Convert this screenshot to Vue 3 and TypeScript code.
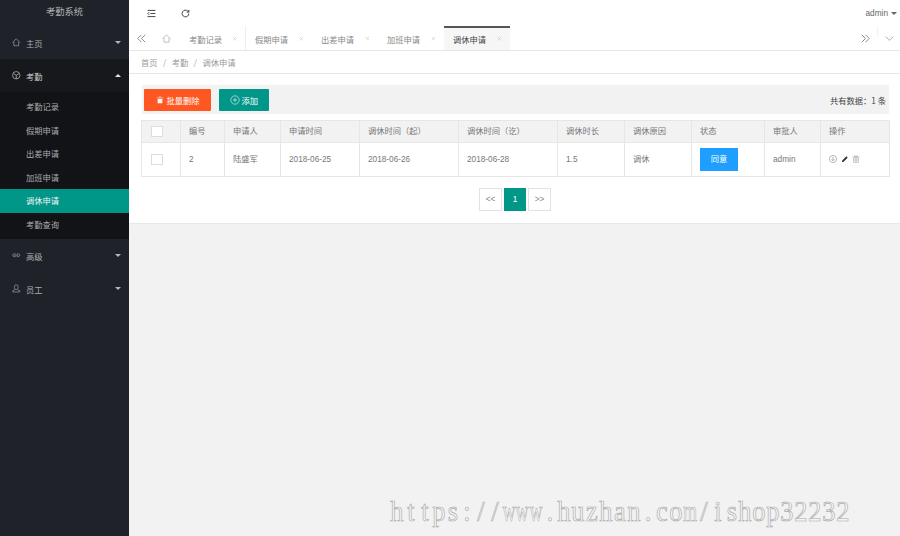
<template>
  <div class="app">
    <!-- Sidebar -->
    <aside class="side">
      <div class="side__title">考勤系统</div>
      <div class="nav nav--first">
        <svg class="nav__icon" viewBox="0 0 16 16"><path d="M1 8.500 8 1.500l7 7M3.500 7v7.500h9V7" /></svg>
        <span>主页</span><i class="caret"></i>
      </div>
      <div class="nav nav--open">
        <svg class="nav__icon" viewBox="0 0 16 16"><circle cx="8" cy="8" r="7" /><path d="M3 5l5 3 5-3M8 8v7" /></svg>
        <span>考勤</span><i class="caret caret--up"></i>
      </div>
      <ul class="sub">
        <li v-for="s in subItems" :key="s" :class="{ 'sub--on': s === '调休申请' }">{{ s }}</li>
      </ul>
      <div class="nav">
        <svg class="nav__icon" viewBox="0 0 16 16"><path d="M7 5.500H4a2.500 2.500 0 0 0 0 5h3M9 5.500h3a2.500 2.500 0 0 1 0 5H9M4.500 8h7" /></svg>
        <span>高级</span><i class="caret"></i>
      </div>
      <div class="nav">
        <svg class="nav__icon" viewBox="0 0 16 16"><path d="M4.500 7V5a3.500 3.500 0 0 1 7 0v2a3.500 3.500 0 0 1-7 0ZM5.500 11 1.500 12.500V15h13v-2.500L10.500 11" /></svg>
        <span>员工</span><i class="caret"></i>
      </div>
    </aside>

    <main class="main">
      <!-- Top bar -->
      <header class="top">
        <svg class="top__icon" viewBox="0 0 16 16"><path d="M1 2.500h14M6 8h9M1 13.500h14M4 5.500 1.500 8 4 10.500" /></svg>
        <svg class="top__icon top__icon--refresh" viewBox="0 0 16 16"><path d="M14 8a6 6 0 1 1-1.800-4.300L14 5.500M14 1.500v4h-4" /></svg>
        <span class="top__user">admin<i class="caret caret--dark"></i></span>
      </header>

      <!-- Tabs -->
      <nav class="tabs">
        <svg class="tabs__arrow" viewBox="0 0 12 12"><path d="M6 1 1 6l5 5M11 1 6 6l5 5" /></svg>
        <svg class="tabs__home" viewBox="0 0 16 16"><path d="M1 8.500 8 1.500l7 7M3.500 7v7.500h9V7" /></svg>
        <div
          v-for="t in tabs"
          :key="t"
          class="tab"
          :class="{ 'tab--on': t === '调休申请' }"
        >
          <span>{{ t }}</span>
          <svg class="tab__x" viewBox="0 0 8 8"><path d="M1 1l6 6M7 1 1 7" /></svg>
        </div>
        <div class="tabs__end">
          <svg class="tabs__arrow" viewBox="0 0 12 12"><path d="M1 1l5 5-5 5M6 1l5 5-5 5" /></svg>
          <i class="tabs__sep"></i>
          <svg class="tabs__down" viewBox="0 0 12 12"><path d="M1 3.500 6 8.500l5-5" /></svg>
        </div>
      </nav>

      <!-- Breadcrumb -->
      <div class="crumb">
        <span>首页</span><em>/</em><span>考勤</span><em>/</em><span>调休申请</span>
      </div>

      <section class="panel">
        <div class="bar">
          <button class="btn btn--red">
            <svg class="btn__icon" viewBox="0 0 12 12"><path d="M1 2.500h10v1H1zM4 1h4v1H4zM2.500 4.500h7V11h-7z" /></svg>
            批量删除
          </button>
          <button class="btn btn--green">
            <svg class="btn__plus" viewBox="0 0 12 12"><circle cx="6" cy="6" r="5" /><path d="M3.500 6h5M6 3.500v5" /></svg>
            添加
          </button>
          <span class="bar__count">共有数据：1 条</span>
        </div>

        <table class="grid">
          <colgroup>
            <col v-for="(w, i) in colWidths" :key="i" :style="{ width: w + 'px' }" />
          </colgroup>
          <thead>
            <tr>
              <th><i class="check"></i></th>
              <th v-for="h in headers" :key="h">{{ h }}</th>
            </tr>
          </thead>
          <tbody>
            <tr>
              <td><i class="check"></i></td>
              <td>2</td>
              <td>陆盛军</td>
              <td>2018-06-25</td>
              <td>2018-06-26</td>
              <td>2018-06-28</td>
              <td>1.5</td>
              <td>调休</td>
              <td><span class="agree">同意</span></td>
              <td>admin</td>
              <td class="ops">
                <svg viewBox="0 0 12 12" class="op op--down"><circle cx="6" cy="6" r="5.300" /><path d="M6 3v5.500M3.800 6.300 6 8.500l2.200-2.200" /></svg>
                <svg viewBox="0 0 12 12" class="op op--fill"><path d="M1.500 8.500 8 2l2 2-6.500 6.500h-2z" /></svg>
                <svg viewBox="0 0 12 12" class="op op--trash"><path d="M1 3h10M4 3V1.500h4V3M2.500 4.500h7V11h-7zM5 6v3.500M7 6v3.500" /></svg>
              </td>
            </tr>
          </tbody>
        </table>

        <div class="pager">
          <span class="pager__item">&lt;&lt;</span>
          <span class="pager__item pager__item--on">1</span>
          <span class="pager__item">&gt;&gt;</span>
        </div>
      </section>
    </main>

    <!-- Watermark: every letter sits in a cell of the same width -->
    <div class="mark">
      <span
        v-for="(c, i) in markChars"
        :key="i"
        class="mark__ch"
        :class="{ 'mark__ch--wide': c === 'w' || c === 'm' }"
      >{{ c }}</span>
    </div>
  </div>
</template>

<script setup lang="ts">
const subItems: string[] = ['考勤记录', '假期申请', '出差申请', '加班申请', '调休申请', '考勤查询']
const tabs: string[] = ['考勤记录', '假期申请', '出差申请', '加班申请', '调休申请']
const headers: string[] = [
  '编号', '申请人', '申请时间', '调休时间（起）', '调休时间（讫）',
  '调休时长', '调休原因', '状态', '审批人', '操作'
]
const colWidths: number[] = [39, 44, 56, 79, 99, 99, 67, 67, 73, 56, 69]
const markChars: string[] = 'https://www.huzhan.com/ishop32232'.split('')
</script>

<style>
html, body {
  margin: 0;
  background: #f2f2f2;
}
</style>

<style scoped>
.app {
  position: relative;
  display: flex;
  width: 900px;
  height: 536px;
  overflow: hidden;
  font-family: "Noto Sans CJK SC", "Liberation Sans", sans-serif;
  font-size: 8.25px;
  color: #666;
}

/* Sidebar */
.side {
  width: 129px;
  flex-shrink: 0;
  background: #1f2229;
  color: #a9abae;
}
.side__title {
  height: 26px;
  line-height: 23px;
  text-align: center;
  font-size: 9.3px;
  color: #b0b2b5;
}
.nav {
  position: relative;
  display: flex;
  align-items: center;
  height: 33px;
  padding-left: 12px;
}
.nav--open {
  color: #d0d1d2;
  background: #16181c;
}
.nav__icon {
  width: 8.500px;
  height: 8.500px;
  margin-right: 5.500px;
  fill: none;
  stroke: currentColor;
  stroke-width: 1.2;
}
.caret {
  position: absolute;
  right: 8.500px;
  top: 50%;
  margin-top: -2px;
  border: 3.500px solid transparent;
  border-bottom: 0;
  border-top-color: #b4b6b9;
}
.caret--up {
  border-top: 0;
  border-bottom: 3.500px solid #e4e4e4;
}
.sub {
  list-style: none;
  margin: 0;
  padding: 3px 0;
  background: #121316;
}
.sub li {
  height: 23.5px;
  line-height: 23.5px;
  padding-left: 26px;
}
.sub li.sub--on {
  background: #009688;
  color: #f4f4f4;
}

/* Main */
.main {
  flex: 1;
  min-width: 0;
  display: flex;
  flex-direction: column;
}
.top {
  display: flex;
  align-items: center;
  height: 26px;
  background: #fff;
  padding: 0 3px 0 18px;
}
.top__icon {
  width: 9px;
  height: 9px;
  fill: none;
  stroke: #333;
  stroke-width: 1.6;
}
.top__icon--refresh {
  margin-left: 25px;
}
.top__user {
  position: relative;
  margin-left: auto;
  padding-right: 9px;
  font-family: "Liberation Sans", sans-serif;
  color: #666;
}
.caret--dark {
  right: 0;
  margin-top: -1px;
  border-width: 3px;
  border-top-color: #666;
  border-bottom: 0;
}

.tabs {
  display: flex;
  align-items: stretch;
  height: 24px;
  background: #fff;
  border-bottom: 1px solid #e6e6e6;
}
.tabs__arrow {
  align-self: center;
  width: 9px;
  height: 9px;
  margin-left: 8px;
  fill: none;
  stroke: #666;
  stroke-width: 1;
}
.tabs__home {
  align-self: center;
  width: 9px;
  height: 9px;
  margin: 0 9px 0 16px;
  fill: none;
  stroke: #999;
  stroke-width: 1.1;
}
.tab {
  display: flex;
  align-items: center;
  justify-content: space-between;
  width: 66px;
  box-sizing: border-box;
  padding: 1px 8px 0 9px;
  color: #888;
}
.tab:first-of-type {
  border-right: 1px solid #eee;
}
.tab--on {
  background: #f6f6f6;
  color: #444;
  border-top: 2px solid #555;
  padding: 0 8px 1px 9px;
}
.tab__x {
  width: 5px;
  height: 5px;
  fill: none;
  stroke: #bbb;
  stroke-width: 0.8;
}
.tabs__end {
  margin-left: auto;
  display: flex;
  align-items: center;
  padding-right: 6px;
}
.tabs__sep {
  width: 1px;
  height: 10px;
  margin: -14px 7px 0 7px;
  background: #f3f3f3;
}
.tabs__down {
  width: 9px;
  height: 9px;
  fill: none;
  stroke: #888;
  stroke-width: 0.9;
}

.crumb {
  display: flex;
  align-items: center;
  height: 22px;
  padding-left: 12px;
  background: #fff;
  border-bottom: 1px solid #e6e6e6;
  color: #999;
  line-height: 12px;
}
.crumb em {
  margin: 0 5.500px;
  font-style: normal;
  color: #aaa;
}

.panel {
  background: #fff;
  padding: 11px 11px 11px 12px;
  height: 127px;
  box-sizing: content-box;
  border-bottom: 1px solid #e8e8e8;
}
.bar {
  display: flex;
  align-items: center;
  height: 29px;
  margin-left: 1px;
  padding-left: 2px;
  background: #f2f2f2;
}
.btn {
  display: inline-flex;
  align-items: center;
  justify-content: center;
  height: 22px;
  border: 0;
  border-radius: 1px;
  padding: 0;
  color: #fff;
  font: inherit;
}
.btn--red {
  width: 67px;
  background: #ff5722;
}
.btn--green {
  width: 50px;
  margin-left: 8px;
  background: #009688;
}
.btn__icon {
  width: 8px;
  height: 8px;
  margin-right: 3px;
  fill: #fff;
}
.btn__plus {
  width: 10px;
  height: 10px;
  margin-right: 1.500px;
  fill: none;
  stroke: #fff;
  stroke-width: 0.7;
}
.bar__count {
  margin-left: auto;
  padding-right: 3px;
  color: #444;
}

.grid {
  width: 748px;
  margin-top: 6px;
  table-layout: fixed;
  border-collapse: collapse;
  font-family: "Liberation Sans", "Noto Sans CJK SC", sans-serif;
  line-height: 12px;
}
.grid th,
.grid td {
  padding: 0 0 0 8px;
  border: 1px solid #e6e6e6;
  text-align: left;
  font-weight: 400;
  color: #777;
}
.grid th {
  height: 22px;
  background: #f2f2f2;
  box-sizing: border-box;
}
.grid td {
  height: 34px;
  box-sizing: border-box;
}
.check {
  display: block;
  width: 9.500px;
  height: 9.500px;
  margin-left: 1px;
  background: #fff;
  border: 1px solid #ddd;
}
.agree {
  display: block;
  width: 38px;
  height: 23px;
  line-height: 23px;
  text-align: center;
  background: #1e9fff;
  color: #fff;
}
.op {
  width: 8px;
  height: 8px;
  margin-right: 4px;
  vertical-align: middle;
  fill: none;
  stroke: #888;
  stroke-width: 0.9;
}
.op--fill {
  margin-right: 3px;
  fill: #333;
  stroke: none;
}
.op--trash {
  stroke: #999;
}

.pager {
  display: flex;
  justify-content: center;
  gap: 2px;
  margin-top: 11px;
  font-family: "Liberation Sans", sans-serif;
}
.pager__item {
  box-sizing: border-box;
  width: 22.5px;
  height: 23px;
  line-height: 21px;
  text-align: center;
  background: #fff;
  border: 1px solid #e2e2e2;
  color: #888;
}
.pager__item--on {
  background: #009688;
  border-color: #009688;
  color: #fff;
}

/* Watermark over the page */
.mark {
  position: absolute;
  left: 390px;
  top: 493px;
  display: flex;
  font-family: "Liberation Serif", serif;
  font-size: 30px;
  line-height: 36px;
  white-space: nowrap;
  color: #f5f5f5;
  -webkit-text-stroke: 0.7px #aaa;
  opacity: 0.99;
}
.mark__ch {
  width: 13.95px;
  display: flex;
  justify-content: center;
  transform: scaleX(0.88);
}
.mark__ch--wide {
  transform: scaleX(0.6);
}
</style>
